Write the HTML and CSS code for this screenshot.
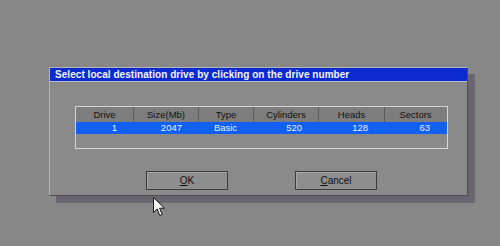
FILE: index.html
```html
<!DOCTYPE html>
<html>
<head>
<meta charset="utf-8">
<link rel="stylesheet" href="styles.css">
</head>
<body>
<div class="screen">
  <div class="dialog">
    <div class="titlebar">Select local destination drive by clicking on the drive number</div>
    <div class="body">
      <div class="table">
        <div class="row head">
          <div class="cell">Drive</div>
          <div class="cell">Size(Mb)</div>
          <div class="cell">Type</div>
          <div class="cell">Cylinders</div>
          <div class="cell">Heads</div>
          <div class="cell">Sectors</div>
        </div>
        <div class="row sel">
          <div class="cell num">1</div>
          <div class="cell num">2047</div>
          <div class="cell ctr">Basic</div>
          <div class="cell num">520</div>
          <div class="cell num">128</div>
          <div class="cell num">63</div>
        </div>
        <div class="row empty"></div>
      </div>
      <div class="buttons">
        <div class="btn"><u>O</u>K</div>
        <div class="btn"><u>C</u>ancel</div>
      </div>
    </div>
  </div>
  <svg class="cursor" width="13" height="20" viewBox="0 0 13 20">
    <path d="M0.5 0.5 L0.5 15.5 L4.2 12 L6.8 18.5 L9.2 17.5 L6.6 11.2 L11.5 11.2 Z" fill="#f4f4f4" stroke="#1a1a1a" stroke-width="1" stroke-linejoin="miter"/>
  </svg>
</div>
</body>
</html>
```

FILE: styles.css
```css
html, body {
  margin: 0;
  padding: 0;
  background: #878787;
}
.screen {
  position: relative;
  width: 500px;
  height: 246px;
  padding: 67px 0 0 49px;
  box-sizing: border-box;
  font-family: "Liberation Sans", Arial, sans-serif;
}
.dialog {
  width: 417px;
  background: #8a8a8a;
  border: 1px solid #b4b4b4;
  border-right-color: #4e4a50;
  border-bottom-color: #4e4a50;
  box-shadow: 7px 7px 0 #6a6570;
}
.titlebar {
  height: 13px;
  background: #0b2bd0;
  border-bottom: 1px solid #b8bccc;
  color: #f4f4ff;
  font-weight: bold;
  font-size: 10px;
  line-height: 13px;
  padding-left: 5px;
  letter-spacing: 0.05px;
  white-space: nowrap;
  overflow: hidden;
}
.body {
  padding: 24px 19px 5px 25px;
}
.table {
  border: 1px solid #d2d2d2;
  border-right-color: #d8d8d8;
  background: #8a8a8a;
}
.row {
  display: grid;
  grid-template-columns: 57px 65px 55px 65px 66px 62px;
}
.head {
  height: 15px;
  background: #7d7d7d;
}
.head .cell {
  color: #111;
  text-align: center;
  border-left: 1px solid #5c5c5c;
  line-height: 15px;
}
.head .cell:first-child {
  border-left: none;
}
.cell {
  font-size: 9.5px;
  white-space: nowrap;
}
.sel {
  height: 12px;
  background: #1160f2;
}
.sel .cell {
  color: #e8f0ff;
  line-height: 12px;
}
.num {
  text-align: right;
  padding-right: 16px;
}
.ctr {
  text-align: center;
}
.empty {
  height: 14px;
}
.buttons {
  margin-top: 22px;
  display: flex;
  justify-content: center;
  gap: 67px;
}
.btn {
  width: 80px;
  height: 17px;
  border: 1px solid #3c3c3c;
  background: #8e8e8e;
  box-shadow: inset 1px 1px 0 #a8a8a8;
  color: #111;
  font-size: 10px;
  line-height: 17px;
  text-align: center;
}
.cursor {
  position: absolute;
  left: 153px;
  top: 197px;
}
```
